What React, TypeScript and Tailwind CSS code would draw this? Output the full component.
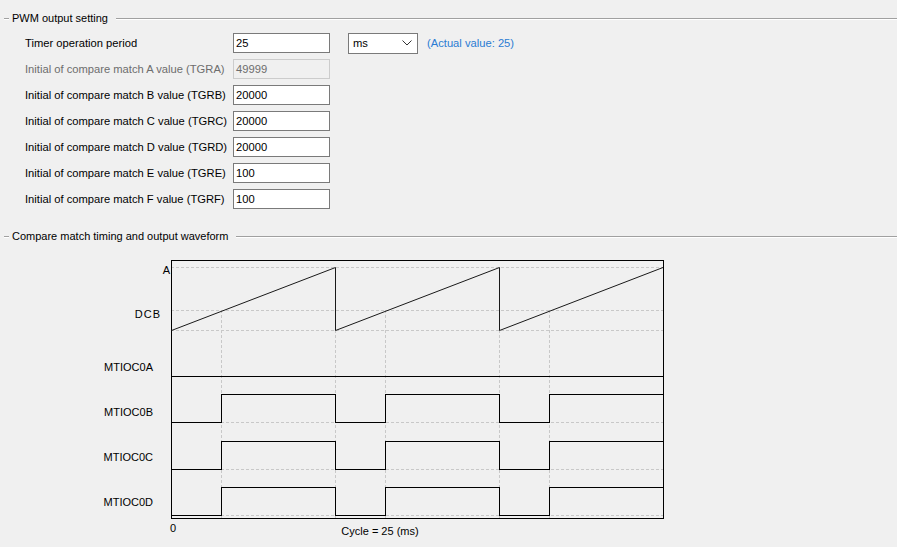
import React from 'react';

const FONT = { fontFamily: '"Liberation Sans", Arial, sans-serif' };

// group box caption with the etched line
function GroupHeader({ title }: { title: string }) {
  return (
    <div className="flex h-[16px] items-start">
      <div className="ml-[4px] mt-[8px] h-0 w-[5px] border-t border-b border-t-[#a0a0a0] border-b-white" />
      <span className="ml-[3px] leading-[16px] text-black">{title}</span>
      <div className="ml-[8px] mt-[8px] h-0 flex-1 border-t border-b border-t-[#a0a0a0] border-b-white" />
    </div>
  );
}

interface Row {
  label: string;
  value: string;
  disabled?: boolean;
}

const ROWS: Row[] = [
  { label: 'Initial of compare match A value (TGRA)', value: '49999', disabled: true },
  { label: 'Initial of compare match B value (TGRB)', value: '20000' },
  { label: 'Initial of compare match C value (TGRC)', value: '20000' },
  { label: 'Initial of compare match D value (TGRD)', value: '20000' },
  { label: 'Initial of compare match E value (TGRE)', value: '100' },
  { label: 'Initial of compare match F value (TGRF)', value: '100' },
];

function TextBox({ value, disabled }: { value: string; disabled?: boolean }) {
  return (
    <div
      className={
        disabled
          ? 'flex h-[20px] w-[97px] shrink-0 items-center border border-[#cccccc] bg-[#f0f0f0] pl-[2px] text-[#6d6d6d]'
          : 'flex h-[20px] w-[97px] shrink-0 items-center border border-[#7a7a7a] bg-white pl-[2px] text-black'
      }
    >
      {value}
    </div>
  );
}

function Waveform() {
  const xs = { l: 171, r: 663 };
  const edges = [221, 335, 385, 499, 549];
  const pulse = (hi: number, lo: number) =>
    `171.5,${lo + 0.5} 221.5,${lo + 0.5} 221.5,${hi + 0.5} 335.5,${hi + 0.5} 335.5,${lo + 0.5} 385.5,${lo + 0.5} 385.5,${hi + 0.5} 499.5,${hi + 0.5} 499.5,${lo + 0.5} 549.5,${lo + 0.5} 549.5,${hi + 0.5} 663,${hi + 0.5}`;
  const dash = { stroke: '#c8c8c8', strokeDasharray: '3 2', strokeWidth: 1 };

  return (
    <svg width={897} height={303} viewBox="0 244 897 303" className="block" style={FONT}>
      {/* dashed guides */}
      {[267, 310, 330, 422, 469, 515].map((y) => (
        <line key={y} x1={xs.l} x2={xs.r} y1={y + 0.5} y2={y + 0.5} {...dash} />
      ))}
      {edges.map((x) => (
        <line key={x} x1={x + 0.5} x2={x + 0.5} y1={x === 335 || x === 499 ? 330 : 310} y2={518} {...dash} />
      ))}

      {/* frame */}
      <rect x={171.5} y={260.5} width={492} height={258} fill="none" stroke="#000" strokeWidth={1} shapeRendering="crispEdges" />

      {/* counter sawtooth */}
      <polyline
        points="171.5,330.5 335.5,267.5 335.5,330.5 499.5,267.5 499.5,330.5 663,267.5"
        fill="none"
        stroke="#1a1a1a"
        strokeWidth={1}
      />

      {/* outputs */}
      <line x1={171} x2={663} y1={376.5} y2={376.5} stroke="#000" strokeWidth={1} shapeRendering="crispEdges" />
      <g fill="none" stroke="#000" strokeWidth={1} shapeRendering="crispEdges">
        <polyline points={pulse(394, 422)} />
        <polyline points={pulse(441, 469)} />
        <polyline points={pulse(487, 515)} />
      </g>

      {/* labels */}
      <g fontSize={11} fill="#000">
        <text x={170} y={274} textAnchor="end">A</text>
        <text x={161} y={318} textAnchor="end" letterSpacing={1}>DCB</text>
        <text x={153} y={371} textAnchor="end">MTIOC0A</text>
        <text x={153} y={416} textAnchor="end">MTIOC0B</text>
        <text x={153} y={461} textAnchor="end">MTIOC0C</text>
        <text x={153} y={506} textAnchor="end">MTIOC0D</text>
        <text x={170} y={532}>0</text>
        <text x={380} y={535} textAnchor="middle">Cycle = 25 (ms)</text>
      </g>
    </svg>
  );
}

export default function App() {
  return (
    <div className="h-[547px] w-[897px] overflow-hidden bg-[#f0f0f0] pt-[10px] text-[11px]" style={FONT}>
      <GroupHeader title="PWM output setting" />

      {/* settings rows */}
      <div className="mt-[7px] flex flex-col gap-[6px] text-[11.2px]">
        <div className="flex h-[20px] items-center">
          <span className="w-[233px] shrink-0 whitespace-nowrap pl-[25px] text-black">Timer operation period</span>
          <TextBox value="25" />
          <div className="ml-[18px] flex h-[21px] w-[70px] items-center justify-between border border-[#7a7a7a] bg-white pl-[4px] pr-[5px] text-black">
            <span>ms</span>
            <svg width="10" height="6" viewBox="0 0 10 6">
              <path d="M0.5 0.5 L5 5 L9.5 0.5" fill="none" stroke="#333" strokeWidth="1" />
            </svg>
          </div>
          <span className="ml-[9px] whitespace-nowrap text-[#2b7cd3]">(Actual value: 25)</span>
        </div>
        {ROWS.map((row) => (
          <div key={row.label} className="flex h-[20px] items-center">
            <span
              className={
                row.disabled
                  ? 'w-[233px] shrink-0 whitespace-nowrap pl-[25px] text-[#6d6d6d]'
                  : 'w-[233px] shrink-0 whitespace-nowrap pl-[25px] text-black'
              }
            >
              {row.label}
            </span>
            <TextBox value={row.value} disabled={row.disabled} />
          </div>
        ))}
      </div>

      <div className="mt-[19px]">
        <GroupHeader title="Compare match timing and output waveform" />
      </div>

      <Waveform />
    </div>
  );
}
